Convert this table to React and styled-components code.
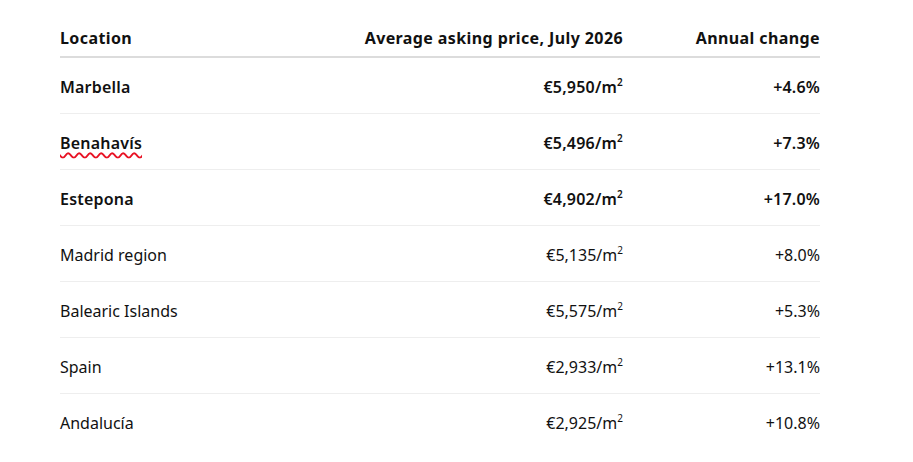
import React from "react";
import styled, { createGlobalStyle } from "styled-components";

const Global = createGlobalStyle`
  html, body { margin: 0; padding: 0; background: #fff; }
  body { font-family: "Noto Sans", "Open Sans", sans-serif; color: #111; }
`;

const Wrap = styled.div`
  padding: 20px 0 0 60px;
  width: 760px;
`;

const Row = styled.div`
  display: grid;
  grid-template-columns: 300px 263px 197px;
  align-items: center;
  height: ${(p) => (p.$head ? "38px" : "56px")};
  padding-top: ${(p) => (p.$head ? "0" : "2px")};
  border-bottom: ${(p) =>
    p.$head ? "2px solid #dcdcdc" : p.$last ? "none" : "1px solid #eeeeee"};
  box-sizing: border-box;
  font-size: 16px;
  font-weight: ${(p) => (p.$head ? 700 : p.$bold ? 600 : 400)};
  letter-spacing: ${(p) => (p.$head ? "0.4px" : p.$bold ? "0.2px" : "0")};
`;

const Cell = styled.div`
  text-align: ${(p) => (p.$right ? "right" : "left")};
  white-space: nowrap;
`;

const Misspelled = styled.span`
  text-decoration: underline wavy #e81123;
  text-decoration-thickness: 1.5px;
  text-underline-offset: 3px;
`;

const Sup = styled.sup`
  font-size: 10px;
  vertical-align: 7px;
  line-height: 0;
`;

const rows = [
  ["Marbella", "€5,950", "+4.6%", true],
  ["Benahavís", "€5,496", "+7.3%", true, true],
  ["Estepona", "€4,902", "+17.0%", true],
  ["Madrid region", "€5,135", "+8.0%"],
  ["Balearic Islands", "€5,575", "+5.3%"],
  ["Spain", "€2,933", "+13.1%"],
  ["Andalucía", "€2,925", "+10.8%"],
];

export default function App() {
  return (
    <>
      <Global />
      <Wrap>
        <Row $head>
          <Cell>Location</Cell>
          <Cell $right>Average asking price, July 2026</Cell>
          <Cell $right>Annual change</Cell>
        </Row>
        {rows.map(([loc, price, chg, bold, miss], i) => (
          <Row key={loc} $bold={bold} $last={i === rows.length - 1}>
            <Cell>{miss ? <Misspelled>{loc}</Misspelled> : loc}</Cell>
            <Cell $right>
              {price}/m<Sup>2</Sup>
            </Cell>
            <Cell $right>{chg}</Cell>
          </Row>
        ))}
      </Wrap>
    </>
  );
}
